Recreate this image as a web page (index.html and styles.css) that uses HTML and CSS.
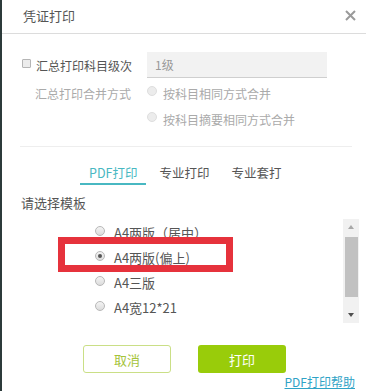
FILE: index.html
```html
<!DOCTYPE html>
<html>
<head>
<meta charset="utf-8">
<link rel="stylesheet" href="styles.css">
</head>
<body>
<div class="dialog">
  <div class="header">
    <span class="title">凭证打印</span>
    <svg class="close" width="11" height="11" viewBox="0 0 11 11"><path d="M1 1L10 10M10 1L1 10" stroke="#9a9a9a" stroke-width="2"/></svg>
  </div>
  <div class="form">
    <div class="row row1">
      <div class="lab"><span class="cb"></span><span>汇总打印科目级次</span></div>
      <div class="input">1级</div>
    </div>
    <div class="row row2 dis">
      <div class="lab">汇总打印合并方式</div>
      <div class="opt"><span class="rd faint"></span><span>按科目相同方式合并</span></div>
    </div>
    <div class="row row3 dis">
      <div class="lab"></div>
      <div class="opt"><span class="rd faint"></span><span>按科目摘要相同方式合并</span></div>
    </div>
  </div>
  <div class="sep"></div>
  <div class="tabs">
    <span class="tab active">PDF打印</span>
    <span class="tab">专业打印</span>
    <span class="tab">专业套打</span>
  </div>
  <div class="choose">请选择模板</div>
  <div class="listbox">
    <div class="items">
      <div class="item"><span class="rd"></span><span>A4两版（居中）</span></div>
      <div class="item"><span class="rd on"></span><span>A4两版(偏上)</span></div>
      <div class="item"><span class="rd"></span><span>A4三版</span></div>
      <div class="item"><span class="rd"></span><span>A4宽12*21</span></div>
    </div>
    <div class="scroll">
      <span class="arr up"></span>
      <span class="thumb"></span>
      <span class="arr down"></span>
    </div>
    <div class="mark"></div>
  </div>
  <div class="btns">
    <span class="btn cancel">取消</span>
    <span class="btn print">打印</span>
  </div>
  <div class="help"><span class="link">PDF打印帮助</span></div>
</div>
</body>
</html>
```
FILE: styles.css
```css
* { box-sizing: border-box; }
html, body { margin: 0; padding: 0; background: #fff; }
body { font-family: "Noto Sans CJK SC", "Microsoft YaHei", sans-serif; color: #555; }
.dialog {
  width: 366px; height: 391px;
  border-left: 2px solid #2c3a3a;
  overflow: hidden;
}
.header {
  height: 34px;
  border-bottom: 1px solid #dcdcdc;
  display: flex; align-items: center; justify-content: space-between;
  padding: 0 10px 0 21px;
}
.title { font-size: 13px; color: #555; line-height: 20px; margin-top: -2px; }
.close { display: block; margin-top: -3px; }
.form { padding-top: 18px; }
.row { display: flex; align-items: center; height: 26px; font-size: 12px; }
.row2 { margin-top: 2px; }
.lab { width: 145px; display: flex; align-items: center; padding-left: 20px; }
.row2 .lab, .row3 .lab { padding-left: 33px; }
.cb {
  width: 9px; height: 9px; border: 1px solid #b5b5b5; background: #ececec;
  border-radius: 1px; margin-right: 5px; margin-top: -3px;
}
.input {
  width: 180px; height: 26px; background: #f2f2f2;
  border-bottom: 1px solid #cfcfcf;
  color: #999; line-height: 26px; padding-left: 8px; font-size: 12px;
}
.dis { color: #aaa; }
.opt { display: flex; align-items: center; }
.rd {
  width: 10px; height: 10px; border-radius: 50%;
  border: 1px solid #b8b8b8;
  background: linear-gradient(#f4f4f4, #dcdcdc);
  margin-right: 9px; margin-top: -4px; position: relative;
}
.rd.faint { border-color: #dedede; background: #ececec; margin-right: 6px; }
.rd.on::after {
  content: ""; position: absolute; left: 2px; top: 2px;
  width: 4px; height: 4px; border-radius: 50%; background: #555;
}
.sep { height: 1px; background: #eee; margin: 14px 14px 0 18px; }
.tabs { display: flex; gap: 4px; padding-left: 78px; margin-top: 16px; }
.tab {
  font-size: 12.5px; line-height: 20px; padding: 0 9px;
  border-bottom: 2px solid transparent; color: #555;
}
.tab.active { color: #48b8c2; border-bottom-color: #48b8c2; }
.choose { font-size: 13px; line-height: 20px; margin: 8px 0 0 19px; color: #555; }
.listbox {
  position: relative; display: flex; justify-content: space-between;
  margin: 6px 7px 0 18px; height: 104px;
}
.items { padding: 1px 0 0 75px; }
.item { display: flex; align-items: center; height: 25px; font-size: 13px; color: #555; }
.scroll {
  width: 16px; height: 104px; background: #f1f1f1;
  display: flex; flex-direction: column; align-items: center;
}
.arr { width: 0; height: 0; border-left: 3.5px solid transparent; border-right: 3.5px solid transparent; }
.arr.up { border-bottom: 4px solid #a8a8a8; margin-top: 6px; }
.thumb { width: 13px; height: 60px; background: #c1c1c1; margin-top: 8px; }
.arr.down { border-top: 4px solid #505050; margin-top: 16px; }
.mark {
  position: absolute; left: 38px; top: 18px; width: 175px; height: 35px;
  border: 7px solid #e6323c;
}
.btns { display: flex; justify-content: center; gap: 27px; margin-top: 22px; padding-left: 1px; }
.btn {
  width: 88px; height: 28px; border-radius: 3px; font-size: 13px;
  display: flex; align-items: center; justify-content: center;
}
.cancel { border: 1px solid #cadf86; color: #a5c33a; background: #fff; }
.print { background: #99cc0a; color: #fff; }
.help { display: flex; justify-content: flex-end; padding-right: 11px; margin-top: 1px; }
.link { font-size: 12px; line-height: 16px; color: #2fa3c6; text-decoration: underline; }
```
